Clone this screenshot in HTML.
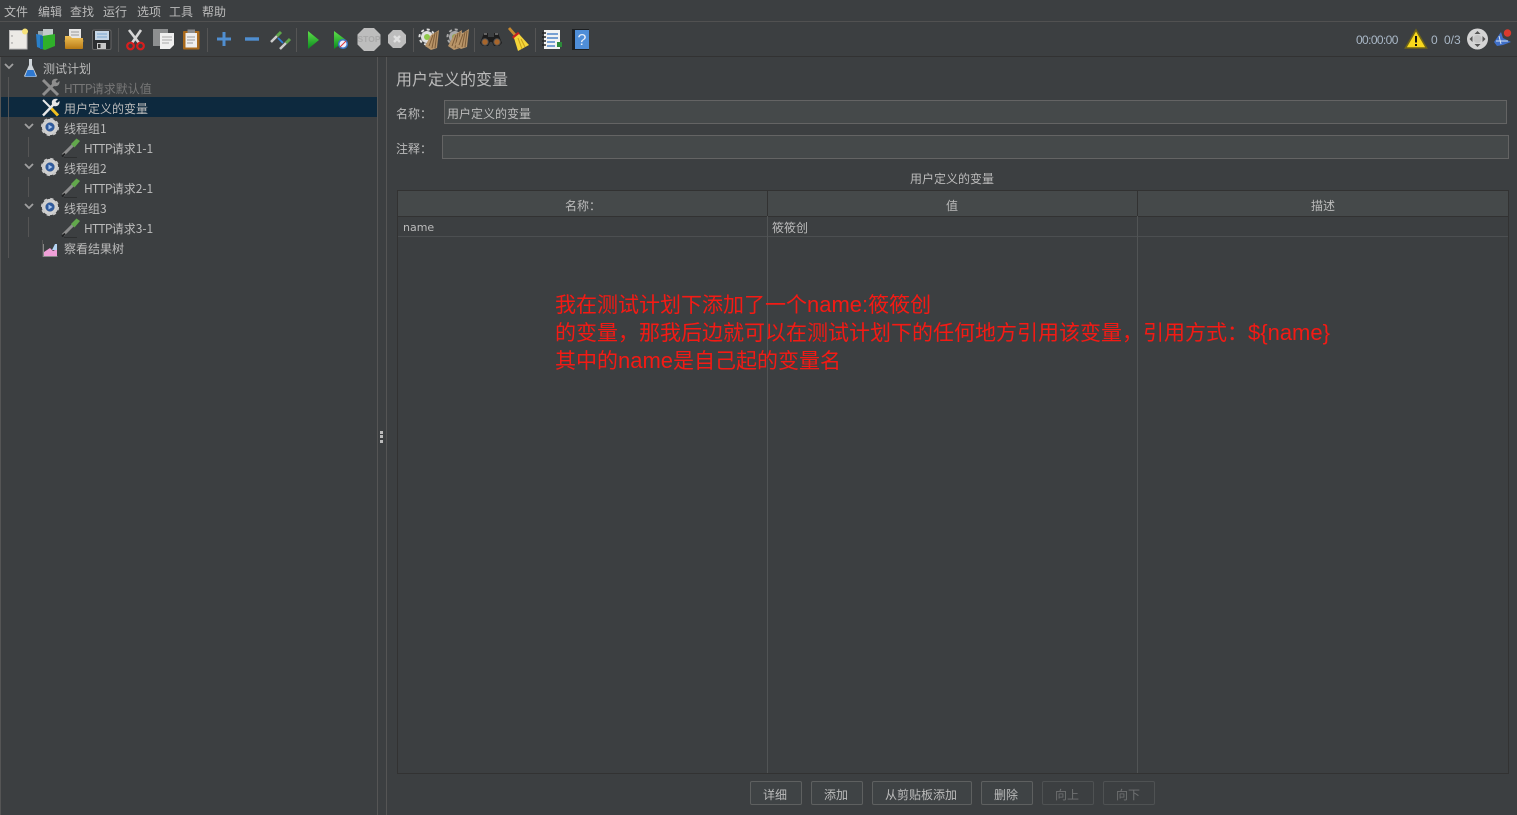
<!DOCTYPE html>
<html lang="zh"><head><meta charset="utf-8"><title>JMeter</title>
<style>
html,body{margin:0;padding:0;width:1517px;height:815px;overflow:hidden;background:#3c3f41}
body{position:relative;font-family:"Liberation Sans","WenQuanYi Zen Hei","Noto Sans CJK SC",sans-serif;font-size:12px;color:#bbb}
.t{position:absolute;white-space:nowrap;line-height:16px;height:16px}
.cjk{font-family:"WenQuanYi Zen Hei","Noto Sans CJK SC",sans-serif}
.h{letter-spacing:-.75px}
.b{position:absolute;box-sizing:border-box}
.btn{position:absolute;top:781px;height:24px;box-sizing:border-box;border:1px solid #5e6060;border-radius:2px;background:#3f4345;text-align:center;line-height:25px;color:#bbb;text-indent:-2px}
.btn.d{color:#6f7172;border-color:#4f5253;background:#3c3f41}
.ann{position:absolute;left:555px;font-size:21px;line-height:28px;height:28px;color:#f41a14;white-space:nowrap;font-family:"Liberation Sans","WenQuanYi Zen Hei","Noto Sans CJK SC",sans-serif}
.ann span{font-size:22px}
svg{position:absolute;left:0;top:0}
</style></head><body>
<div class="b" style="left:0;top:21px;width:1517px;height:1px;background:#515151"></div>
<div class="b" style="left:0;top:56px;width:1517px;height:1px;background:#323232"></div>
<div class="b" style="left:0;top:57px;width:1px;height:758px;background:#555"></div>
<div class="b" style="left:377px;top:57px;width:1px;height:758px;background:#555"></div>
<div class="b" style="left:386px;top:57px;width:1px;height:758px;background:#555"></div>
<div class="b" style="left:1px;top:97px;width:376px;height:20px;background:#0d293e"></div>
<div class="b" style="left:380px;top:431px;width:3px;height:3px;background:#bbb"></div>
<div class="b" style="left:380px;top:435px;width:3px;height:3px;background:#bbb"></div>
<div class="b" style="left:380px;top:440px;width:3px;height:3px;background:#bbb"></div>

<div class="t cjk" style="left:4px;top:4px">文件</div>
<div class="t cjk" style="left:38px;top:4px">编辑</div>
<div class="t cjk" style="left:70px;top:4px">查找</div>
<div class="t cjk" style="left:103px;top:4px">运行</div>
<div class="t cjk" style="left:137px;top:4px">选项</div>
<div class="t cjk" style="left:169px;top:4px">工具</div>
<div class="t cjk" style="left:202px;top:4px">帮助</div>

<div class="t cjk" style="left:43px;top:61px">测试计划</div>
<div class="t cjk" style="left:64px;top:81px;color:#777"><span class="h">HTTP</span>请求默认值</div>
<div class="t cjk" style="left:64px;top:101px">用户定义的变量</div>
<div class="t cjk" style="left:64px;top:121px">线程组1</div>
<div class="t cjk" style="left:84px;top:141px"><span class="h">HTTP</span>请求1-1</div>
<div class="t cjk" style="left:64px;top:161px">线程组2</div>
<div class="t cjk" style="left:84px;top:181px"><span class="h">HTTP</span>请求2-1</div>
<div class="t cjk" style="left:64px;top:201px">线程组3</div>
<div class="t cjk" style="left:84px;top:221px"><span class="h">HTTP</span>请求3-1</div>
<div class="t cjk" style="left:64px;top:241px">察看结果树</div>

<div class="t" style="left:1356px;top:32px;color:#a9b7c6;letter-spacing:-.62px">00:00:00</div>
<div class="t" style="left:1431px;top:32px;color:#a9b7c6">0</div>
<div class="t" style="left:1444px;top:32px;color:#a9b7c6">0/3</div>

<div class="t cjk" style="left:396px;top:69px;font-size:16px;height:18px;line-height:18px">用户定义的变量</div>
<div class="t cjk" style="left:396px;top:106px">名称：</div>
<div class="b" style="left:444px;top:100px;width:1063px;height:24px;background:#45494a;border:1px solid #646464"></div>
<div class="t cjk" style="left:447px;top:106px">用户定义的变量</div>
<div class="t cjk" style="left:396px;top:141px">注释：</div>
<div class="b" style="left:442px;top:135px;width:1067px;height:24px;background:#45494a;border:1px solid #646464"></div>
<div class="t cjk" style="left:910px;top:171px">用户定义的变量</div>

<div class="b" style="left:397px;top:190px;width:1112px;height:584px;border:1px solid #323232"></div>
<div class="b" style="left:398px;top:191px;width:1110px;height:25px;background:#45494a"></div>
<div class="b" style="left:398px;top:216px;width:1110px;height:1px;background:#323232"></div>
<div class="b" style="left:398px;top:236px;width:1110px;height:1px;background:#4c4f51"></div>
<div class="b" style="left:767px;top:191px;width:1px;height:582px;background:#515455"></div>
<div class="b" style="left:1137px;top:191px;width:1px;height:582px;background:#515455"></div>
<div class="b" style="left:767px;top:191px;width:1px;height:25px;background:#323232"></div>
<div class="b" style="left:1137px;top:191px;width:1px;height:25px;background:#323232"></div>
<div class="t cjk" style="left:565px;top:198px">名称：</div>
<div class="t cjk" style="left:946px;top:198px">值</div>
<div class="t cjk" style="left:1311px;top:198px">描述</div>
<div class="t" style="left:403px;top:220px;font-family:'DejaVu Sans',sans-serif;font-size:11px">name</div>
<div class="t cjk" style="left:772px;top:220px">筱筱创</div>

<div class="ann" style="top:291px">我在测试计划下添加了一个<span>name:</span>筱筱创</div>
<div class="ann" style="top:319px">的变量，那我后边就可以在测试计划下的任何地方引用该变量，引用方式：<span>${name}</span></div>
<div class="ann" style="top:347px">其中的<span>name</span>是自己起的变量名</div>

<div class="btn cjk" style="left:750px;width:52px">详细</div>
<div class="btn cjk" style="left:811px;width:52px">添加</div>
<div class="btn cjk" style="left:872px;width:100px">从剪贴板添加</div>
<div class="btn cjk" style="left:981px;width:52px">删除</div>
<div class="btn cjk d" style="left:1042px;width:52px">向上</div>
<div class="btn cjk d" style="left:1103px;width:52px">向下</div>

<svg width="1517" height="815" viewBox="0 0 1517 815" xmlns="http://www.w3.org/2000/svg">
<defs>
<linearGradient id="gg" x1="0" y1="0" x2="0" y2="1"><stop offset="0" stop-color="#5fe04a"/><stop offset="1" stop-color="#0a8a1e"/></linearGradient>
<linearGradient id="fo" x1="0" y1="0" x2="0" y2="1"><stop offset="0" stop-color="#f2c35a"/><stop offset="1" stop-color="#b87a14"/></linearGradient>
<g id="gear"><circle r="6.300" fill="none" stroke="#d0d0d0" stroke-width="3.600"/><circle r="7.900" fill="none" stroke="#c8c8c8" stroke-width="2.400" stroke-dasharray="3.100 3.100"/><circle r="4.500" fill="#2f5a9c"/><path d="M-1.500-2.500L2.500 0-1.500 2.500Z" fill="#a9c6ee"/></g>
<g id="pip"><path d="M2 17 L12 7" stroke="#8f8f8f" stroke-width="3" fill="none"/><path d="M1 18.500 L4 15.500" stroke="#1f2021" stroke-width="1.800"/><path d="M10 6 L15.500 .5 L19 3 L13.500 9.500Z" fill="#62a84c"/><path d="M3 19.500H16" stroke="#2d2f30" stroke-width="1"/></g>
<g id="broom"><path d="M-1 14 L5 3 L13 -2 L11 16 L5 18Z" fill="#b89468"/><path d="M3 14L7 3M6 16L9 1M9 16L11 0" stroke="#7c5c38" stroke-width="1"/></g>
</defs>

<!-- toolbar separators -->
<g fill="#555"><rect x="118" y="28" width="1" height="24"/><rect x="207" y="28" width="1" height="24"/><rect x="296" y="28" width="1" height="24"/><rect x="413" y="28" width="1" height="24"/><rect x="474" y="28" width="1" height="24"/><rect x="535" y="28" width="1" height="24"/></g>

<!-- new -->
<rect x="9.500" y="30.500" width="17.500" height="18.500" fill="#eceae6" stroke="#bbb"/><circle cx="25" cy="31.500" r="3" fill="#f6e27a"/><circle cx="12" cy="36" r=".7" fill="#888"/><circle cx="12" cy="43" r=".7" fill="#888"/>
<!-- templates -->
<path d="M38 31h11v6H38z" fill="#9aa6aa"/><path d="M43 29h10v7H43z" fill="#c2cacb"/><path d="M36 34l6 1v14l-5-2z" fill="#2a7fc8"/><path d="M42 36l13-2v12l-10 4-3-1z" fill="#2fb02a"/><path d="M40 36h3v13h-3z" fill="#1a6aa8"/>
<!-- open -->
<rect x="69" y="29" width="12" height="12" fill="#e6e6e6"/><path d="M71 32h8M71 35h8" stroke="#999"/><path d="M65 36h5l2 2h11v10a1 1 0 0 1-1 1H66a1 1 0 0 1-1-1Z" fill="url(#fo)"/><path d="M64.500 41h19" stroke="#d9a63a"/>
<!-- save -->
<rect x="92.500" y="30" width="18.500" height="19.500" rx="1.500" fill="#2c2e30" stroke="#666"/><rect x="95" y="31" width="14" height="9" fill="#c6d6e6"/><path d="M97 34h10M97 37h10" stroke="#7aa6d0"/><rect x="97" y="43" width="9" height="6" fill="#c8c8c8"/><rect x="98" y="44" width="2.500" height="4" fill="#333"/>
<!-- cut -->
<path d="M129 30 L139 43M141 30 L132 43" stroke="#d6d6d6" stroke-width="2.600"/><circle cx="130.500" cy="46" r="3.300" fill="none" stroke="#d81e1e" stroke-width="2.200"/><circle cx="140.500" cy="46" r="3.300" fill="none" stroke="#d81e1e" stroke-width="2.200"/>
<!-- copy -->
<rect x="153" y="29" width="15" height="17" fill="#8d8f90"/><path d="M160 33h14v12l-4 4h-10z" fill="#efefef"/><path d="M162 37h10M162 40h10M162 43h7" stroke="#aaa"/>
<!-- paste -->
<rect x="183" y="31" width="16.500" height="18.500" rx="1" fill="#a8691c"/><rect x="185.500" y="33" width="11.500" height="14.500" fill="#eee"/><path d="M187 37h8M187 40h8M187 43h6" stroke="#999"/><rect x="187.500" y="29.500" width="7.500" height="3.500" fill="#8b8b8b"/>
<!-- plus minus -->
<path d="M224 32v14M217 39h14" stroke="#4f8ed0" stroke-width="3"/><path d="M245 39h14" stroke="#4f8ed0" stroke-width="3.400"/>
<!-- toggle -->
<path d="M271 42 L277 36" stroke="#ccc" stroke-width="2.500"/><path d="M277 36 L281 32" stroke="#5fa84a" stroke-width="3"/><path d="M280 49 L286 43" stroke="#ccc" stroke-width="2.500"/><path d="M286 43 L290 39" stroke="#5fa84a" stroke-width="3"/><path d="M278 38 L283 43" stroke="#2f7fd8" stroke-width="1.800"/>
<!-- run -->
<path d="M308 31 L319 40 L308 49Z" fill="url(#gg)"/>
<path d="M334 31 L346 40 L334 49Z" fill="url(#gg)"/><circle cx="343" cy="44" r="4.300" fill="#eef" stroke="#3a74c4" stroke-width="1.500"/><path d="M340 47l6-6" stroke="#d33" stroke-width="1"/>
<!-- stop -->
<path d="M364 28h10l6.500 6.500v10l-6.500 6.500h-10l-6.500-6.500v-10z" fill="#bdbdbd"/><text x="369" y="42" text-anchor="middle" font-size="8.500" font-weight="bold" fill="#a8a8a8" font-family="Liberation Sans">STOP</text>
<path d="M393 30h8l5 5v8l-5 5h-8l-5-5v-8z" fill="#bdbdbd"/><path d="M394 36l6 6M400 36l-6 6" stroke="#e0e0e0" stroke-width="2.500"/>
<!-- clear -->
<circle cx="427" cy="37" r="6" fill="#e0e0e0"/><circle cx="427" cy="37" r="7.500" fill="none" stroke="#ddd" stroke-width="2" stroke-dasharray="3 2.800"/><circle cx="427" cy="37" r="3" fill="#8fc84a"/>
<use href="#broom" x="426" y="32"/>
<circle cx="455" cy="37" r="6" fill="#aaa"/><circle cx="455" cy="37" r="7.500" fill="none" stroke="#aaa" stroke-width="2" stroke-dasharray="3 2.800"/><circle cx="455" cy="37" r="3" fill="#8fa84a"/>
<use href="#broom" x="449" y="32"/><use href="#broom" x="456" y="31"/>
<!-- binoculars -->
<path d="M484 33h4v4h6v-4h4l4 10-3 3h-5l-2-4h-2l-2 4h-5l-3-3z" fill="#1d1d1d"/><circle cx="485" cy="42" r="3.200" fill="#a8662c" stroke="#555"/><circle cx="497" cy="42" r="3.200" fill="#a8662c" stroke="#555"/><path d="M484 34h3M495 34h3" stroke="#aaa"/>
<!-- broom yellow -->
<path d="M509 28 L516 36" stroke="#c88a30" stroke-width="2.800"/><path d="M513 38 L519 33" stroke="#c82020" stroke-width="3"/><path d="M514 38 L519 34 L529 45 L518 51Z" fill="#f4d53a"/><path d="M518 38 L522 49M521 39 L525 47" stroke="#c8a018"/>
<!-- function -->
<rect x="544" y="30" width="16" height="19" fill="#f2f2f2"/><path d="M547 34h11M547 38h11M547 42h8M547 46h8" stroke="#2f6fc0" stroke-width="1.300"/><path d="M542 33h4M542 37h4M542 41h4M542 45h4" stroke="#222" stroke-width="1.600"/><rect x="557" y="42" width="5" height="5" fill="#2c8a3a"/>
<!-- help -->
<rect x="572" y="29" width="17" height="21" fill="#1e2022"/><rect x="575" y="30" width="14" height="19" fill="#4f8ed8"/><text x="582" y="45" text-anchor="middle" font-size="16" fill="#e8eef8" font-family="Liberation Sans">?</text>

<!-- right status -->
<path d="M1416 30 L1426.500 48 H1405.500Z" fill="#f8d81c" stroke="#6e6418" stroke-width="1.600"/><path d="M1416 36v6.500" stroke="#111" stroke-width="2"/><rect x="1415" y="44" width="2" height="2" fill="#111"/>
<circle cx="1477.500" cy="39" r="10.500" fill="#d4d4d4"/><circle cx="1477.500" cy="39" r="4" fill="#c4c4c4"/><path d="M1477.500 31l3 3h-6zM1477.500 47l3-3h-6zM1469.500 39l3-3v6zM1485.500 39l-3-3v6z" fill="#555"/>
<path d="M1494 42 L1501 32 L1503 38 L1511 42 L1503 45 L1497 46Z" fill="#3f6fc8"/><path d="M1496 41l12 0M1499 36l2 8" stroke="#d8e4f4" stroke-width="1"/><circle cx="1507.500" cy="33" r="3.700" fill="#d83a2e"/>

<!-- tree guides -->
<g fill="#555"><rect x="8" y="77" width="1" height="181"/><rect x="28" y="137" width="1" height="20"/><rect x="28" y="177" width="1" height="20"/><rect x="28" y="217" width="1" height="20"/><rect x="42" y="240" width="1" height="17"/></g>
<!-- arrows -->
<g fill="none" stroke="#a0a0a0" stroke-width="1.800"><path d="M5 64l4 4 4-4"/><path d="M25 124l4 4 4-4"/><path d="M25 164l4 4 4-4"/><path d="M25 204l4 4 4-4"/></g>
<!-- flask -->
<path d="M29 59h3v6l4.500 10a1.200 1.200 0 0 1-1 2H25.500a1.200 1.200 0 0 1-1-2L29 65z" fill="#cfd5da"/><path d="M27.500 70h6l2.500 6.500h-11z" fill="#2e78d0"/>
<!-- wrench tree icons -->
<g stroke="#8e8e8e" fill="#8e8e8e"><path d="M43 80 L58 95" stroke-width="3" fill="none"/><path d="M43 95 L54 84" stroke-width="3" fill="none"/><path d="M52 84 C51 80 54 78 58 79 L55.500 81.500 L57 83 L59.500 81 C60 85 57 87 54 86Z" stroke="none"/></g>
<path d="M43 100 L50 107" stroke="#e8e8e8" stroke-width="2" fill="none"/><path d="M50 107 L58 115.500" stroke="#f0c020" stroke-width="3" fill="none"/><path d="M43 115.500 L54 104" stroke="#e8e8e8" stroke-width="2.400" fill="none"/><path d="M52 104 C51 100 54 98 58 99 L55.500 101.500 L57 103 L59.500 101 C60 105 57 107 54 106Z" fill="#e8e8e8"/>
<use href="#gear" x="50" y="127"/><use href="#gear" x="50" y="167"/><use href="#gear" x="50" y="207"/>
<use href="#pip" x="61" y="138"/><use href="#pip" x="61" y="178"/><use href="#pip" x="61" y="218"/>
<!-- view results -->
<path d="M44 256 L44 252 L50 248 L53 251 L57 249 V256Z" fill="#f0a0d8"/><path d="M52 250 L55 244 L57 244 L57 250Z" fill="#b4d4f4"/><path d="M43.500 244v12.500h14" stroke="#888" fill="none"/>
</svg>
</body></html>
